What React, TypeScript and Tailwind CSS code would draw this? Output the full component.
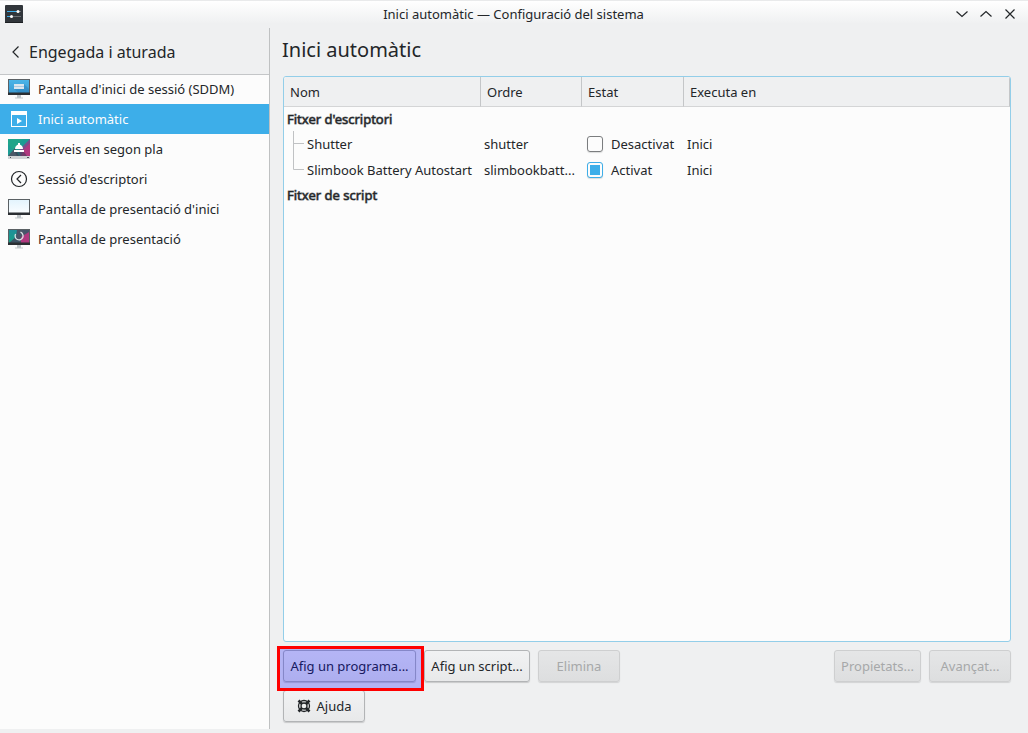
import React, { useState } from 'react';

interface NavItem {
  label: string;
  icon: React.ReactNode;
}

interface Entry {
  name: string;
  command: string;
  enabled: boolean;
  runOn: string;
}

const AppIcon = () => (
  <svg width="18" height="18" viewBox="0 0 18 18" aria-hidden="true">
    <rect width="18" height="18" rx="1" fill="#31363b" />
    <path d="M0 17h18v1H0z" fill="#1d2023" />
    <path d="M2 6.5h11" stroke="#3daee9" />
    <path d="M13 6.5h3M7 11.5h9" stroke="#6b7075" />
    <path d="M2 11.5h5" stroke="#3daee9" />
    <circle cx="13" cy="6.5" r="1.5" fill="#fff" />
    <circle cx="6.5" cy="11.5" r="1.5" fill="#fff" />
  </svg>
);

const Monitor: React.FC<{ id: string; from: string; to: string; children?: React.ReactNode }> = ({ id, from, to, children }) => (
  <svg width="22" height="22" viewBox="0 0 22 22" aria-hidden="true">
    <defs>
      <linearGradient id={id} x1="0" y1="0" x2="0" y2="1">
        <stop offset="0" stopColor={from} />
        <stop offset="1" stopColor={to} />
      </linearGradient>
    </defs>
    <path d="M9 17h4v3H9z" fill="#bdc3c7" />
    <path d="M7 19.5h8v1H7z" fill="#c5cacd" />
    <rect y="1" width="22" height="16" fill="#5b6165" />
    <rect x="1" y="2" width="20" height="13" fill={`url(#${id})`} />
    {children}
    <path d="M0 14.5h22V17H0z" fill="#2b2f33" />
  </svg>
);

const LoginIcon = () => (
  <Monitor id="login" from="#4bb5e8" to="#3a9ad2">
    <path d="m16 6 5 5v4H11l-5-4z" fill="#2980b9" opacity="0.5" />
    <path d="M6 6h10v5H6z" fill="#a9cbe2" />
    <path d="M6 6h10v2H6zM6 9h10v2H6z" fill="#dbe6ee" />
  </Monitor>
);

const AutostartIcon = () => (
  <svg width="22" height="22" viewBox="0 0 22 22" aria-hidden="true">
    <path d="M3 3h16v16H3zM4 7v11h14V7z" fill="#fff" fillRule="evenodd" />
    <path d="m9 10 5 3-5 3z" fill="#fff" />
  </svg>
);

const ServicesIcon = () => (
  <svg width="22" height="22" viewBox="0 0 22 22" aria-hidden="true">
    <path d="M0 1h22v18H0z" fill="#1c9c94" />
    <path d="M0 1h15L5 12 0 6z" fill="#1fa58a" />
    <path d="M22 1v18H12l-1-7z" fill="#7a4f8c" />
    <path d="M22 5v14H13l2-7z" fill="#b0387f" />
    <path d="m0 18 7-8 4 8z" fill="#4a5a68" />
    <path d="M7 14h9l3 4H9z" fill="#2c3e50" opacity="0.5" />
    <path d="M0 18h22v3H0z" fill="#d0d3d5" />
    <path d="M2 19.5h1M19 19.5h2" stroke="#4d5357" />
    <path d="M10 5h2v2h-2zM7 11c0-6 8-6 8 0zM6 12h10v2H6z" fill="#fff" />
  </svg>
);

const SessionIcon = () => (
  <svg width="22" height="22" viewBox="0 0 22 22" fill="none" stroke="#232629" aria-hidden="true">
    <circle cx="11" cy="11" r="7.5" strokeWidth="1.2" />
    <path d="m13 7-4 4 4 4" strokeWidth="1.2" />
  </svg>
);

const BootSplashIcon = () => <Monitor id="boot" from="#e3f4fd" to="#fafdff" />;

const SplashIcon = () => (
  <Monitor id="splash" from="#1f8f99" to="#16a085">
    <path d="m1 15 8-7 5 7z" fill="#3d5263" />
    <path d="M13 2h8v6z" fill="#45546b" />
    <path d="M9 2h5l7 6-6 7h-3L8 8z" fill="#4a5568" />
    <path d="m13 9 8-5v11h-8z" fill="#b0387f" />
    <path d="M12.5 4.2A4 4 0 1 1 7.6 6" fill="none" stroke="#dfe3e6" strokeWidth="1.3" />
  </Monitor>
);

const HelpIcon = () => (
  <svg width="14" height="14" viewBox="0 0 14 14" fill="none" stroke="#232629" aria-hidden="true">
    <circle cx="7" cy="7" r="5.5" strokeWidth="1.3" />
    <circle cx="7" cy="7" r="3" strokeWidth="1.3" />
    <path d="M1.5 1.5 5 5M12.5 1.5 9 5M1.5 12.5 5 9M12.5 12.5 9 9" strokeWidth="2.6" />
  </svg>
);

const navItems: NavItem[] = [
  { label: "Pantalla d'inici de sessió (SDDM)", icon: <LoginIcon /> },
  { label: 'Inici automàtic', icon: <AutostartIcon /> },
  { label: 'Serveis en segon pla', icon: <ServicesIcon /> },
  { label: "Sessió d'escriptori", icon: <SessionIcon /> },
  { label: "Pantalla de presentació d'inici", icon: <BootSplashIcon /> },
  { label: 'Pantalla de presentació', icon: <SplashIcon /> },
];

const initialEntries: Entry[] = [
  { name: 'Shutter', command: 'shutter', enabled: false, runOn: 'Inici' },
  { name: 'Slimbook Battery Autostart', command: 'slimbookbatt...', enabled: true, runOn: 'Inici' },
];

const WindowButton: React.FC<{ label: string; d: string }> = ({ label, d }) => (
  <button type="button" aria-label={label} className="flex size-6 items-center justify-center">
    <svg width="12" height="12" viewBox="0 0 12 12" fill="none" stroke="#232629" strokeWidth="1.2">
      <path d={d} />
    </svg>
  </button>
);

interface PushButtonProps {
  className: string;
  disabled?: boolean;
  children: React.ReactNode;
}

const PushButton: React.FC<PushButtonProps> = ({ className, disabled, children }) => (
  <button
    type="button"
    disabled={disabled}
    className={`flex h-8 items-center justify-center rounded-[3px] border whitespace-nowrap ${
      disabled
        ? 'border-[#cecfd0] bg-linear-to-b from-[#e5e6e7] to-[#dddedf] text-[#a6a8a9] shadow-[0_1px_1px_#d2d3d4]'
        : 'border-[#b2b4b6] bg-linear-to-b from-[#f1f2f3] to-[#e8e9ea] shadow-[0_1px_1px_#c8c9ca]'
    } ${className}`}
  >
    {children}
  </button>
);

const TitleBar = () => (
  <header className="flex h-7 shrink-0 items-center border-t border-[#e9eaeb] bg-linear-to-b from-white to-[#eff0f1] to-85% pr-1.5 pb-px pl-1">
    <div className="flex-1 pl-px">
      <AppIcon />
    </div>
    <div>Inici automàtic — Configuració del sistema</div>
    <div className="flex flex-1 justify-end">
      <WindowButton label="Minimitza" d="m0.5 3.5 5.5 5 5.5-5" />
      <WindowButton label="Maximitza" d="m0.5 8.5 5.5-5 5.5 5" />
      <WindowButton label="Tanca" d="m1.5 1.5 9 9m0-9-9 9" />
    </div>
  </header>
);

const Sidebar: React.FC<{ active: number; onSelect: (index: number) => void }> = ({ active, onSelect }) => (
  <aside className="mb-1 flex w-[270px] shrink-0 flex-col border-r border-[#bfc1c2]">
    <button type="button" className="flex h-[47px] shrink-0 items-center gap-2 border-b border-[#c4c6c8] px-[11px] pt-0.5 text-base">
      <svg width="10" height="14" viewBox="0 0 10 14" fill="none" stroke="#232629" strokeWidth="1.2" aria-hidden="true">
        <path d="M7.5 1.5 2 7l5.5 5.5" />
      </svg>
      Engegada i aturada
    </button>
    <nav className="flex-1 bg-[#fcfcfc]">
      <ul>
        {navItems.map((item, index) => (
          <li key={item.label}>
            <a
              href="#"
              onClick={() => onSelect(index)}
              aria-current={index === active ? 'page' : undefined}
              className={`flex items-center gap-2 px-2 ${index === 0 ? 'h-[29px] pb-px' : 'h-[30px]'} ${
                index === active ? 'bg-[#3daee9] text-[#fcfcfc]' : ''
              }`}
            >
              {item.icon}
              {item.label}
            </a>
          </li>
        ))}
      </ul>
    </nav>
  </aside>
);

const GroupRow: React.FC<{ label: string }> = ({ label }) => (
  <tr className="h-6">
    <th
      colSpan={4}
      scope="rowgroup"
      className="p-0 pl-[3px] text-left font-normal [-webkit-text-stroke:1px_#23262999]"
    >
      {label}
    </th>
  </tr>
);

const App: React.FC = () => {
  const [active, setActive] = useState(1);
  const [entries, setEntries] = useState(initialEntries);

  const toggle = (name: string) =>
    setEntries(entries.map((e) => (e.name === name ? { ...e, enabled: !e.enabled } : e)));

  return (
    <div className="flex h-screen flex-col bg-[#eff0f1] font-['Noto_Sans',sans-serif] text-[13px] leading-5 text-[#232629]">
      <TitleBar />
      <div className="flex min-h-0 flex-1">
        <Sidebar active={active} onSelect={setActive} />

        <main className="flex min-w-0 flex-1 flex-col pr-[17px] pb-[11px] pl-[13px]">
          <h1 className="-ml-px flex h-12 shrink-0 items-center pb-1 text-xl">Inici automàtic</h1>

          <div className="min-h-0 flex-1 overflow-hidden rounded-[3px] border border-[#93cee9] bg-[#fcfcfc]">
            <table className="w-full table-fixed border-separate border-spacing-0">
              <colgroup>
                <col className="w-[197px]" />
                <col className="w-[101px]" />
                <col className="w-[102px]" />
                <col />
              </colgroup>
              <thead>
                <tr className="h-[30px]">
                  {['Nom', 'Ordre', 'Estat', 'Executa en'].map((title) => (
                    <th
                      key={title}
                      scope="col"
                      className="border-r border-b border-r-[#c4c6c8] border-b-[#d4d5d6] bg-[#eff0f1] p-0 pl-1.5 text-left font-normal"
                    >
                      {title}
                    </th>
                  ))}
                </tr>
              </thead>
              <tbody>
                <GroupRow label="Fitxer d'escriptori" />
                {entries.map((entry, index) => (
                  <tr key={entry.name} className="h-[26px]">
                    <td className="p-0">
                      <div className="flex items-center whitespace-nowrap">
                        <svg width="23" height="26" viewBox="0 0 23 26" fill="none" stroke="#c0c2c4" className="shrink-0" aria-hidden="true">
                          <path d={index === entries.length - 1 ? 'M9.5 0v12.5H20' : 'M9.5 0v26M9.5 12.5H20'} />
                        </svg>
                        {entry.name}
                      </div>
                    </td>
                    <td className="p-0 pl-[3px] whitespace-nowrap">{entry.command}</td>
                    <td className="p-0 pl-[5px]">
                      <label className="flex items-center gap-2">
                        <input
                          type="checkbox"
                          checked={entry.enabled}
                          onChange={() => toggle(entry.name)}
                          className="size-4 appearance-none rounded-[3px] border border-[#7b7d7f] bg-clip-content p-0.5 shadow-[0_1px_1px_#dcdddd] checked:border-[#3daee9] checked:bg-[#3daee9]"
                        />
                        {entry.enabled ? 'Activat' : 'Desactivat'}
                      </label>
                    </td>
                    <td className="p-0 pl-[3px]">{entry.runOn}</td>
                  </tr>
                ))}
                <GroupRow label="Fitxer de script" />
              </tbody>
            </table>
          </div>

          <div className="mt-2 flex shrink-0 gap-2">
            <div className="relative">
              <PushButton className="w-[133px]">Afig un programa...</PushButton>
              <span className="pointer-events-none absolute -top-1 -left-1.5 z-10 h-[45px] w-[147px] border-3 border-[#ff0000] bg-[#0000ff]/25" />
            </div>
            <PushButton className="w-[106px]">Afig un script...</PushButton>
            <PushButton className="w-[82px]" disabled>
              Elimina
            </PushButton>
            <PushButton className="ml-auto w-[87px]" disabled>
              Propietats...
            </PushButton>
            <PushButton className="w-[82px]" disabled>
              Avançat...
            </PushButton>
          </div>
          <div className="mt-2 flex shrink-0">
            <PushButton className="w-[82px] gap-1.5">
              <HelpIcon />
              Ajuda
            </PushButton>
          </div>
        </main>
      </div>
    </div>
  );
};

export default App;
